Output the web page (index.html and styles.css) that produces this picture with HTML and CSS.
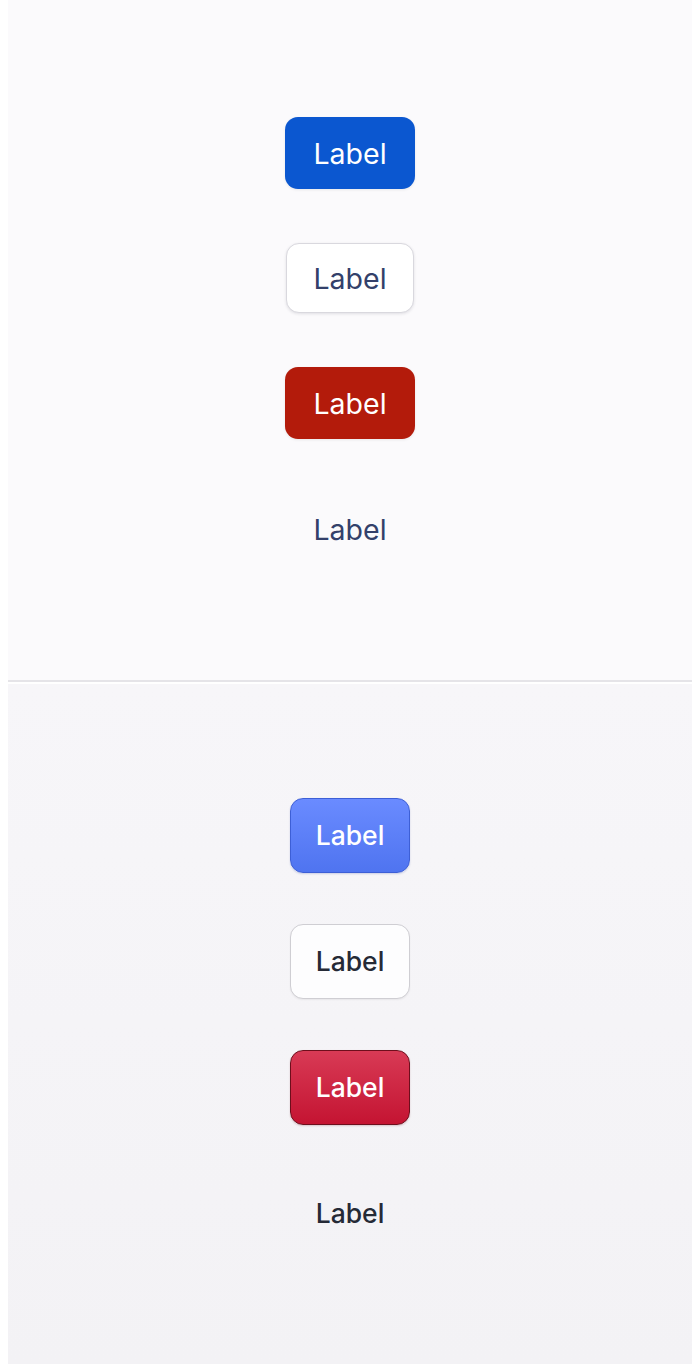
FILE: index.html
```html
<!DOCTYPE html>
<html>
<head>
<meta charset="utf-8">
<link rel="stylesheet" href="styles.css">
</head>
<body>
<section class="panel panel-a">
  <button class="btn-a primary">Label</button>
  <button class="btn-a outline">Label</button>
  <button class="btn-a danger">Label</button>
  <button class="btn-a ghost">Label</button>
</section>
<section class="panel panel-b">
  <button class="btn-b primary">Label</button>
  <button class="btn-b outline">Label</button>
  <button class="btn-b danger">Label</button>
  <button class="btn-b ghost">Label</button>
</section>
</body>
</html>
```
FILE: styles.css
```css
html, body { margin: 0; padding: 0; background: #ffffff; }
body { margin: 0 8px; font-family: Inter, "Noto Sans", sans-serif; }

.panel {
  display: flex;
  flex-direction: column;
  align-items: center;
  justify-content: center;
  box-sizing: border-box;
}
.panel-a {
  height: 682px;
  background: #fbfafc;
  gap: 54px;
  border-bottom: 2px solid #e5e4e8;
  padding-top: 2px;
}
.panel-b {
  margin-top: 2px;
  height: 680px;
  background: linear-gradient(#f7f6f9, #f3f2f5);
  gap: 51px;
}

button { font-family: inherit; cursor: pointer; }

.btn-a {
  width: 130px;
  height: 72px;
  border-radius: 13px;
  font-size: 28.5px;
  font-weight: 400;
  border: none;
  padding: 0;
}
.btn-a.primary { background: #0b57d0; color: #ffffff; box-shadow: 0 1px 3px rgba(0,0,0,0.08); }
.btn-a.outline { width: 128px; height: 70px; background: #ffffff; color: #33406a; border: 1px solid #d9d8de; box-shadow: 0 1px 3px rgba(30,30,60,0.12); }
.btn-a.danger { background: #b31b0b; color: #ffffff; box-shadow: 0 1px 3px rgba(0,0,0,0.08); }
.btn-a.ghost { background: transparent; color: #33406a; }

.btn-b {
  width: 120px;
  height: 75px;
  border-radius: 13px;
  font-size: 26.5px;
  font-weight: 500;
  padding: 0;
  box-sizing: border-box;
}
.btn-b.primary {
  background: linear-gradient(#6a8bff, #4f74f0);
  color: #ffffff;
  border: 1.5px solid #3d5fd6;
  box-shadow: 0 1px 2px rgba(30,50,150,0.2);
}
.btn-b.outline {
  background: #fdfdfe;
  color: #252a36;
  border: 1.5px solid #cfced3;
  box-shadow: 0 1px 2px rgba(0,0,0,0.06);
}
.btn-b.danger {
  background: linear-gradient(#d83a55, #c41432);
  color: #ffffff;
  border: 1.5px solid #6e0e1c;
  box-shadow: 0 1px 2px rgba(100,0,20,0.2);
}
.btn-b.ghost { background: transparent; border: none; color: #252a36; }
```
